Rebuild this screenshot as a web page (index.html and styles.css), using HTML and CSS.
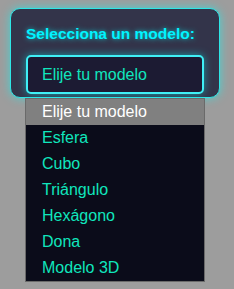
FILE: index.html
```html
<!DOCTYPE html>
<html lang="es">
<head>
    <meta charset="UTF-8">
    <meta name="viewport" content="width=device-width, initial-scale=1.0">
    <title>Selector de modelo</title>
    <link rel="stylesheet" href="styles.css">
</head>
<body>

<div class="panel">
    <label class="panel-title" for="modelo">Selecciona un modelo:</label>
    <div class="select-box" id="modelo">Elije tu modelo</div>
</div>

<!-- open dropdown list -->
<ul class="options">
    <li class="option selected">Elije tu modelo</li>
    <li class="option">Esfera</li>
    <li class="option">Cubo</li>
    <li class="option">Triángulo</li>
    <li class="option">Hexágono</li>
    <li class="option">Dona</li>
    <li class="option">Modelo 3D</li>
</ul>

</body>
</html>
```

FILE: styles.css
```css
body {
    margin: 0;
    background-color: #9d9d9d;
    font-family: "Liberation Sans", Arial, sans-serif;
    position: relative;
    height: 289px;
    overflow: hidden;
}
.panel {
    margin: 8px 0 0 10px;
    width: 210px;
    height: 90px;
    box-sizing: border-box;
    padding: 16px 15px 0 15px;
    background-color: #33344a;
    border: 1px solid #2ee6e6;
    border-radius: 10px;
    box-shadow: 0 0 10px rgba(0, 255, 255, 0.55);
}
.panel-title {
    display: block;
    font-size: 15.5px;
    font-weight: bold;
    line-height: 18px;
    color: #00f4ff;
    text-shadow: 0 0 5px rgba(0, 255, 255, 0.7);
    margin-bottom: 12px;
}
.select-box {
    width: 178px;
    height: 39px;
    box-sizing: border-box;
    padding-left: 14px;
    border: 2px solid #3ff0f6;
    border-radius: 5px;
    background-color: #1c1b33;
    color: #10e6bd;
    font-size: 16px;
    line-height: 35px;
    box-shadow: 0 0 8px rgba(0, 255, 255, 0.5);
}
.options {
    position: absolute;
    top: 98px;
    left: 25px;
    width: 180px;
    margin: 0;
    padding: 0;
    list-style: none;
    box-sizing: border-box;
    border: 1px solid #6a6a6a;
    background-color: #0b0c1a;
}
.option {
    height: 26px;
    line-height: 26px;
    padding-left: 16px;
    font-size: 16px;
    color: #10e6bd;
}
.option.selected {
    background-color: #808080;
    color: #fff;
}
```
